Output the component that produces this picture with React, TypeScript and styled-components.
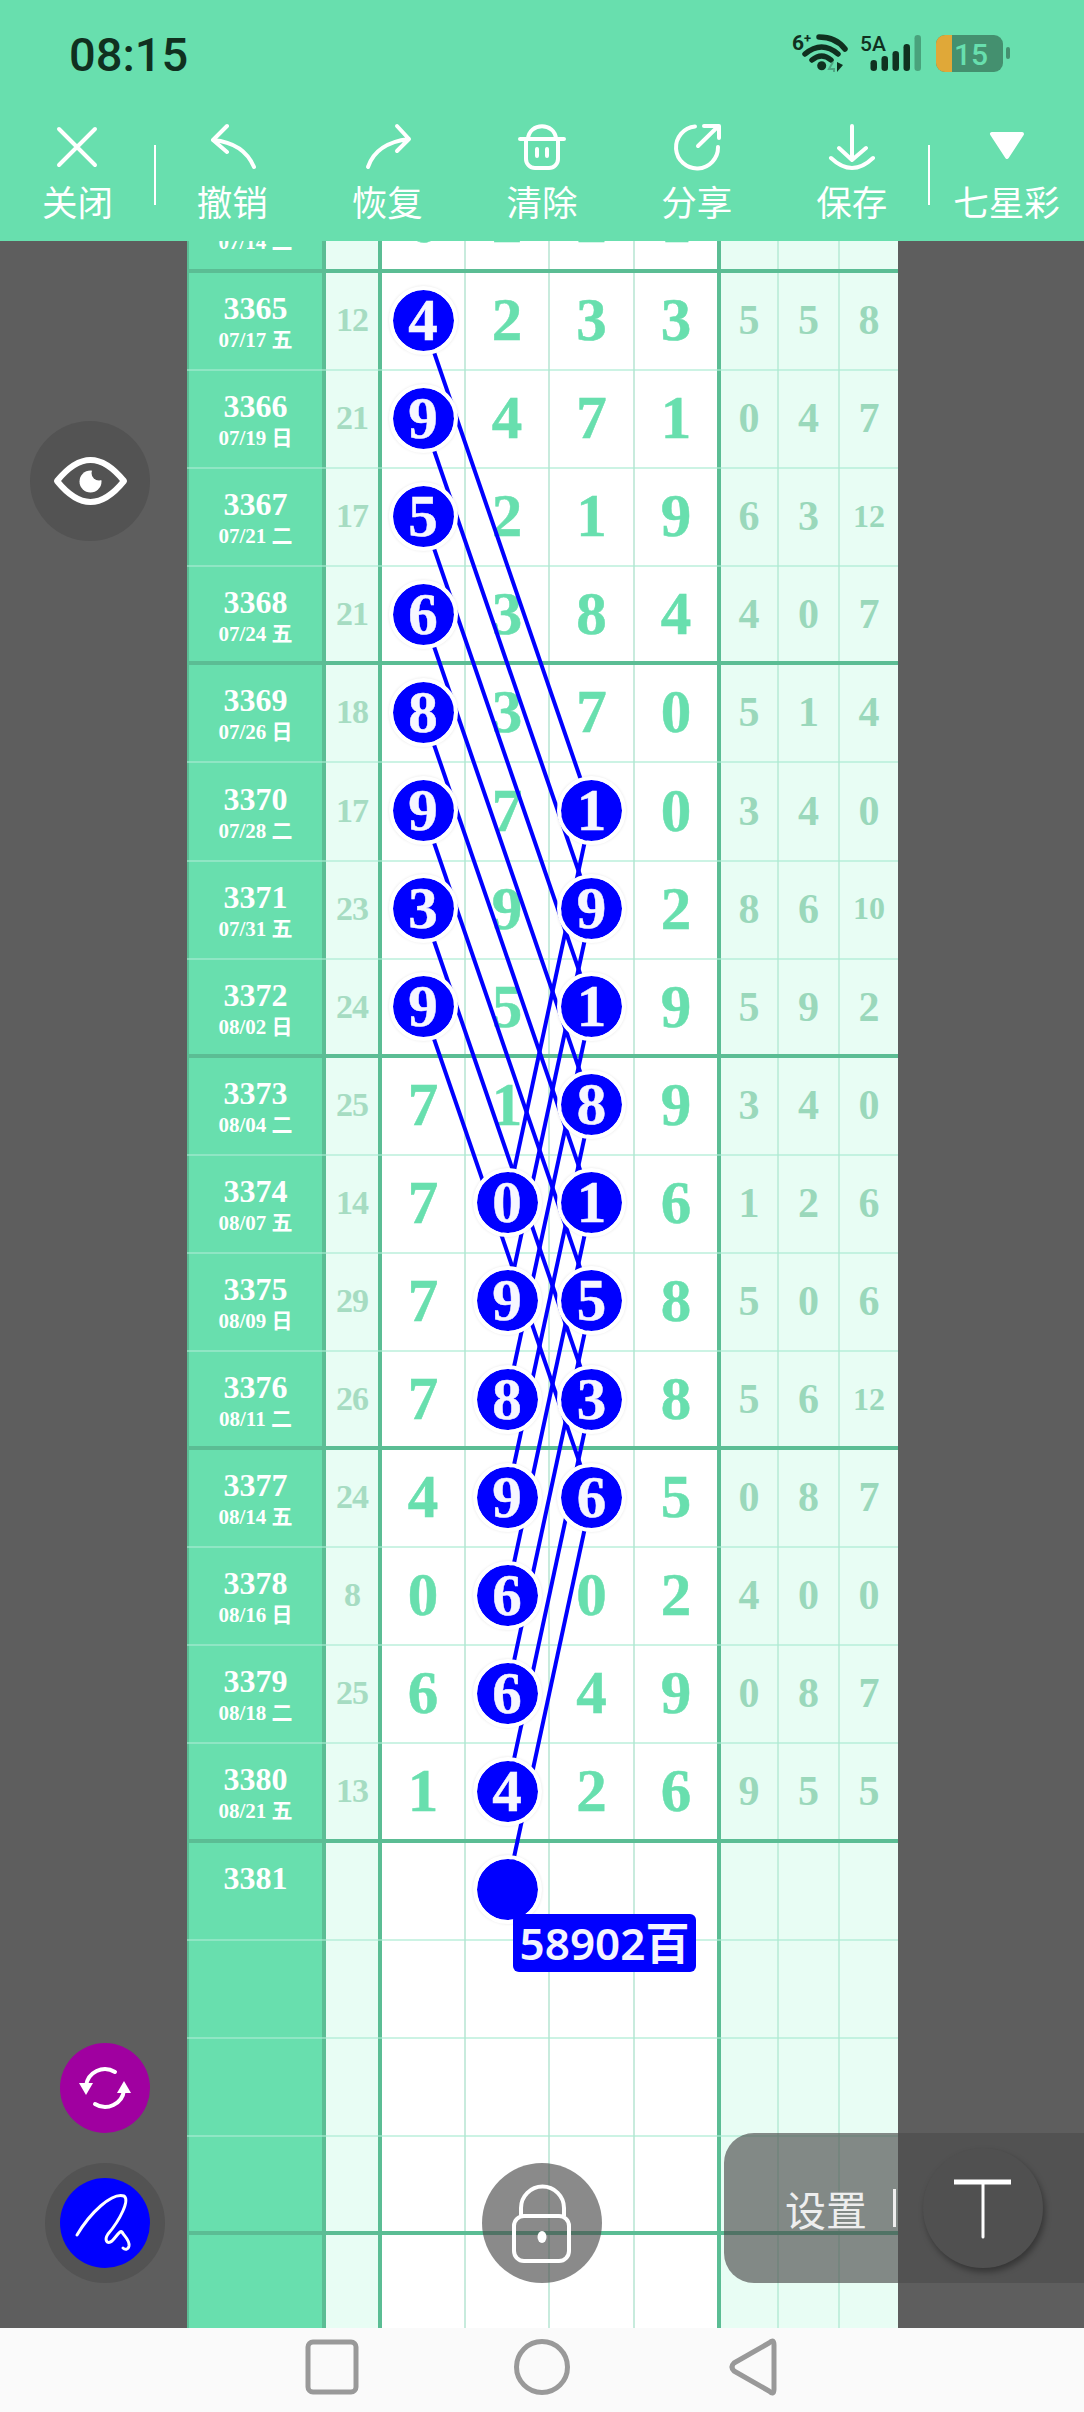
import React, { FC } from "react";
import styled, { createGlobalStyle } from "styled-components";

const GREEN = "#68dfae";
const LINE = "#5bbd94";
const BLUE = "#0000ff";
const PITCH = 98.1;
const COLS = [139, 56, 84, 84, 85, 86, 58, 61, 58];

interface RowData {
  no?: string;
  date?: string;
  sum?: number;
  digits?: number[];
  stats?: number[];
  marks?: number[];
}

const r = (no: string, date: string, sum: number, digits: number[], stats: number[], marks: number[] = []): RowData => ({
  no,
  date,
  sum,
  digits,
  stats,
  marks,
});

const rows: RowData[] = [
  // scrolled almost out of view, only the bottom of these shows under the header
  { date: "07/14 二", digits: [6, 2, 2, 1] },
  r("3365", "07/17 五", 12, [4, 2, 3, 3], [5, 5, 8], [0]),
  r("3366", "07/19 日", 21, [9, 4, 7, 1], [0, 4, 7], [0]),
  r("3367", "07/21 二", 17, [5, 2, 1, 9], [6, 3, 12], [0]),
  r("3368", "07/24 五", 21, [6, 3, 8, 4], [4, 0, 7], [0]),
  r("3369", "07/26 日", 18, [8, 3, 7, 0], [5, 1, 4], [0]),
  r("3370", "07/28 二", 17, [9, 7, 1, 0], [3, 4, 0], [0, 2]),
  r("3371", "07/31 五", 23, [3, 9, 9, 2], [8, 6, 10], [0, 2]),
  r("3372", "08/02 日", 24, [9, 5, 1, 9], [5, 9, 2], [0, 2]),
  r("3373", "08/04 二", 25, [7, 1, 8, 9], [3, 4, 0], [2]),
  r("3374", "08/07 五", 14, [7, 0, 1, 6], [1, 2, 6], [1, 2]),
  r("3375", "08/09 日", 29, [7, 9, 5, 8], [5, 0, 6], [1, 2]),
  r("3376", "08/11 二", 26, [7, 8, 3, 8], [5, 6, 12], [1, 2]),
  r("3377", "08/14 五", 24, [4, 9, 6, 5], [0, 8, 7], [1, 2]),
  r("3378", "08/16 日", 8, [0, 6, 0, 2], [4, 0, 0], [1]),
  r("3379", "08/18 二", 25, [6, 6, 4, 9], [0, 8, 7], [1]),
  r("3380", "08/21 五", 13, [1, 4, 2, 6], [9, 5, 5], [1]),
  { no: "3381", marks: [1] },
  {},
  {},
  {},
  {},
];

// main digit column centre inside the table, the 2 is the cell's right line
const colX = (c: number) => COLS.slice(0, c + 2).reduce((a, b) => a + b, 0) + (COLS[c + 2] - 2) / 2;
const rowY = (i: number) => i * PITCH + PITCH / 2 - 2;

const links = rows.flatMap((row, i) =>
  (row.marks ?? []).flatMap((c) => {
    if (c === 0) return [{ x1: colX(0), y1: rowY(i), x2: colX(2), y2: rowY(i + 5) }];
    if (c === 2) return [{ x1: colX(2), y1: rowY(i), x2: colX(1), y2: rowY(i + 4) }];
    return [];
  })
);

const tools = [
  { label: "关闭", icon: <path d="M12 6L48 42M48 6L12 42" /> },
  { label: "撤销", icon: <path d="M25 3L11 17L25 29M11 17Q42 20 52 44" /> },
  { label: "恢复", icon: <path d="M40 3L52 16L40 28M11 44Q19 20 52 16" /> },
  {
    label: "清除",
    icon: <path d="M8 16H52M14 16V36a9 9 0 0 0 9 9H37a9 9 0 0 0 9-9V16M16 16C17 -1 43 -1 44 16M25 26V33M35 26V33" />,
  },
  { label: "分享", icon: <path d="M28 3.5A21 21 0 1 0 51 24M31 23L51 3.5M37 3H52V15" /> },
  { label: "保存", icon: <path d="M30 3V37M17 25L30 37L44 25M9 35Q30 55 51 35" /> },
  { label: "七星彩", icon: <path d="M15 11H45L30 34Z" fill="#fff" /> },
];

const StatusIcons: FC = () => (
  <StatusSvg viewBox="0 0 250 70">
    <text x="12" y="31" fontSize="21" fontWeight="700" fill="#10301f" fontFamily="Roboto, sans-serif">
      6
    </text>
    <text x="24" y="24" fontSize="13" fontWeight="700" fill="#10301f" fontFamily="Roboto, sans-serif">
      +
    </text>
    <g fill="none" stroke="#10301f" strokeWidth="5.5" strokeLinecap="round">
      <path d="M32 41Q41.7 33 51 41" />
      <path d="M25 35Q41.7 21 58 35" />
      <path d="M39 18Q56 18 65 30" />
    </g>
    <circle cx="41.7" cy="46.7" r="4.5" fill="#10301f" />
    <path d="M57 43V53L63 46Z" fill="#10301f" />
    <path d="M53 43L49 50H54V53" fill="none" stroke="#4fa683" strokeWidth="2" />
    <text x="80" y="32" fontSize="21" fontWeight="500" fill="#10301f" fontFamily="Roboto, sans-serif">
      5A
    </text>
    <g fill="#10301f">
      <rect x="90.5" y="41" width="6.5" height="11" rx="3.2" />
      <rect x="101.5" y="37" width="6.5" height="15" rx="3.2" />
      <rect x="112.5" y="32" width="6.5" height="20" rx="3.2" />
      <rect x="123.5" y="25" width="6.5" height="27" rx="3.2" />
    </g>
    <rect x="134.5" y="16" width="6.5" height="36" rx="3.2" fill="#10301f" opacity="0.35" />
    <rect x="156" y="16" width="67" height="37" rx="9" fill="#44906f" />
    <path d="M172 16H165a9 9 0 0 0 -9 9V44a9 9 0 0 0 9 9H172Z" fill="#e0a838" />
    <rect x="226" y="28" width="4" height="12" rx="2" fill="#44906f" />
    <text x="174" y="46" fontSize="30" fontWeight="500" fill={GREEN} fontFamily="Roboto, sans-serif">
      15
    </text>
  </StatusSvg>
);

const App: FC = () => (
  <Page>
    <GlobalStyle />
    <Header>
      <StatusBar>
        <Time>08:15</Time>
        <StatusIcons />
      </StatusBar>
      <Toolbar>
        {tools.map((tool) => (
          <Tool key={tool.label} $divider={tool.label === "关闭"} $dividerLeft={tool.label === "七星彩"}>
            <ToolIcon viewBox="0 0 60 50">{tool.icon}</ToolIcon>
            <ToolLabel>{tool.label}</ToolLabel>
          </Tool>
        ))}
      </Toolbar>
    </Header>

    <Stage>
      <Table>
        {rows.map((row, i) => (
          <Row key={i} $thick={i % 4 === 0}>
            <DateCell>
              <RowNo>{row.no}</RowNo>
              <RowDate>{row.date ?? "\u00a0"}</RowDate>
            </DateCell>
            <SumCell>{row.sum}</SumCell>
            {[0, 1, 2, 3].map((c) => (
              <MainCell key={c}>
                {row.marks?.includes(c) ? <Ball>{row.digits?.[c]}</Ball> : row.digits?.[c]}
              </MainCell>
            ))}
            {[0, 1, 2].map((c) => (
              <StatCell key={c} $small={(row.stats?.[c] ?? 0) > 9}>
                {row.stats?.[c]}
              </StatCell>
            ))}
          </Row>
        ))}
        <Lines>
          {links.map((l, i) => (
            <line key={i} {...l} stroke={BLUE} strokeWidth="4" />
          ))}
        </Lines>
      </Table>

      <Chip>58902百</Chip>

      <EyeButton>
        <svg width="120" height="120" viewBox="0 0 120 120">
          <path
            d="M27 60C40 44 50 39 60.5 39C71 39 81 44 94 60C81 76 71 81 60.5 81C50 81 40 76 27 60Z"
            fill="none"
            stroke="#fff"
            strokeWidth="6"
            strokeLinejoin="round"
          />
          <circle cx="60.5" cy="60.5" r="11" fill="#fff" />
          <circle cx="69" cy="52" r="7.5" fill="#535353" />
        </svg>
      </EyeButton>

      <SyncButton>
        <svg width="90" height="90" viewBox="0 0 90 90" fill="none" stroke="#fff" strokeWidth="4" strokeLinecap="round">
          <path d="M55 29A19 19 0 0 0 26 43" />
          <path d="M35 61A19 19 0 0 0 64 47" />
          <path d="M19 40H33L26 52Z" fill="#fff" stroke="none" />
          <path d="M57 50H71L64 38Z" fill="#fff" stroke="none" />
        </svg>
      </SyncButton>

      <PenButton>
        <PenInner>
          <svg width="90" height="90" viewBox="0 0 90 90" fill="none" stroke="#fff" strokeWidth="3" strokeLinecap="round">
            <path d="M17 57C30 35 52 14 64 18C70 22 60 42 48 56C44 62 47 67 52 63C56 59 60 52 62 54C64 58 70 62 69 68C68 72 65 72 63 70" />
          </svg>
        </PenInner>
      </PenButton>

      <LockButton>
        <svg width="120" height="120" viewBox="0 0 120 120" fill="none" stroke="#fff" strokeWidth="4">
          <path d="M39 53V45a21 21 0 0 1 43 0V53" />
          <rect x="32" y="53" width="55" height="45" rx="10" />
          <ellipse cx="60" cy="74" rx="4.5" ry="6" fill="#fff" stroke="none" />
        </svg>
      </LockButton>

      <SettingsPill>
        设置
        <PillBar />
      </SettingsPill>

      <TextButton>
        <svg width="120" height="120" viewBox="0 0 120 120" fill="none" stroke="#fff">
          <path d="M31 34H88" strokeWidth="5" />
          <path d="M60 34V89" strokeWidth="3" strokeLinecap="round" />
        </svg>
      </TextButton>
    </Stage>

    <NavBar>
      <NavSlot>
        <svg width="60" height="60" viewBox="0 0 60 60" fill="none" stroke="#999" strokeWidth="5">
          <rect x="6" y="5" width="48" height="50" rx="5" />
        </svg>
      </NavSlot>
      <NavSlot>
        <svg width="60" height="60" viewBox="0 0 60 60" fill="none" stroke="#999" strokeWidth="5">
          <circle cx="30" cy="30" r="25.5" />
        </svg>
      </NavSlot>
      <NavSlot>
        <svg width="60" height="60" viewBox="0 0 60 60" fill="none" stroke="#999" strokeWidth="5" strokeLinejoin="round">
          <path d="M47 6Q52 1 52 8V52Q52 59 47 54L12 34Q8 30 12 26Z" />
        </svg>
      </NavSlot>
    </NavBar>
  </Page>
);

export default App;

const GlobalStyle = createGlobalStyle`
  html, body {
    margin: 0;
    padding: 0;
    background: #5e5e5e;
  }
`;

const Page = styled.div`
  width: 1084px;
  height: 2412px;
  display: flex;
  flex-direction: column;
  overflow: hidden;
`;

const Header = styled.header`
  height: 241px;
  flex: none;
  background: ${GREEN};
  position: relative;
  z-index: 5;
`;

const StatusBar = styled.div`
  height: 108px;
  padding: 0 54px 0 69px;
  display: flex;
  align-items: center;
  justify-content: space-between;
`;

const Time = styled.div`
  font: 500 47px/1 Roboto, sans-serif;
  color: #10301f;
`;

const StatusSvg = styled.svg`
  width: 250px;
  height: 70px;
`;

const Toolbar = styled.div`
  display: grid;
  grid-template-columns: repeat(7, 1fr);
  padding-top: 15px;
`;

const Tool = styled.div<{ $divider?: boolean; $dividerLeft?: boolean }>`
  position: relative;
  display: flex;
  flex-direction: column;
  align-items: center;
  gap: 8px;

  &::after {
    content: "";
    display: ${(p) => (p.$divider || p.$dividerLeft ? "block" : "none")};
    position: absolute;
    top: 22px;
    height: 60px;
    width: 2px;
    background: #fff;
    ${(p) => (p.$divider ? "right: -1px;" : "left: -1px;")}
  }
`;

const ToolIcon = styled.svg`
  width: 60px;
  height: 50px;
  fill: none;
  stroke: #fff;
  stroke-width: 4;
  stroke-linecap: round;
  stroke-linejoin: round;
`;

const ToolLabel = styled.div`
  font: 400 35.5px/40px "Noto Sans CJK SC", sans-serif;
  color: #fff;
  white-space: nowrap;
`;

const Stage = styled.main`
  flex: 1;
  min-height: 0;
  position: relative;
  overflow: hidden;
  background: #5e5e5e;
`;

const Table = styled.div`
  position: relative;
  width: ${COLS.reduce((a, b) => a + b, 0)}px;
  margin: -66.1px 0 0 187px;
  font-family: "Liberation Serif", "Noto Sans CJK SC", serif;
  font-weight: 700;
`;

const Row = styled.div<{ $thick: boolean }>`
  position: relative;
  height: ${PITCH}px;
  display: grid;
  grid-template-columns: ${COLS.map((w) => `${w}px`).join(" ")};

  &::after {
    content: "";
    position: absolute;
    left: 0;
    right: 0;
    bottom: 0;
    height: ${(p) => (p.$thick ? 4 : 2)}px;
    background: ${(p) => (p.$thick ? LINE : "rgba(170, 235, 210, 0.6)")};
  }
`;

const Cell = styled.div`
  box-sizing: border-box;
  display: flex;
  align-items: center;
  justify-content: center;
  padding-bottom: 4px;
  min-width: 0;
`;

const DateCell = styled(Cell)`
  flex-direction: column;
  padding-bottom: 0;
  background: ${GREEN};
  border-left: 2px solid ${LINE};
  border-right: 4px solid ${LINE};
  color: #fff;
`;

const RowNo = styled.div`
  font-size: 32px;
  line-height: 36px;
  min-height: 36px;
`;

const RowDate = styled.div`
  font-size: 21px;
  line-height: 28px;
  white-space: nowrap;
`;

const SumCell = styled(Cell)`
  background: #e8fdf4;
  border-right: 4px solid ${LINE};
  color: #a6dcc2;
  font-size: 34px;
  letter-spacing: -1px;
`;

const MainCell = styled(Cell)`
  background: #fff;
  border-right: 2px solid #c8ebdd;
  color: ${GREEN};
  font-size: 61px;
  -webkit-text-stroke: 0.5px ${GREEN};

  &:nth-child(6) {
    border-right: 4px solid ${LINE};
  }
`;

const StatCell = styled(Cell)<{ $small: boolean }>`
  background: #e8fdf4;
  border-right: 2px solid #c3efdd;
  color: #9ad8bb;
  font-size: ${(p) => (p.$small ? 32 : 42)}px;

  &:last-child {
    border-right: none;
  }
`;

const Ball = styled.div`
  position: relative;
  z-index: 2;
  flex: none;
  box-sizing: border-box;
  width: 69px;
  height: 69px;
  border-radius: 50%;
  border: 4px solid #fff;
  box-shadow: 0 0 3px rgba(0, 0, 0, 0.1);
  background-color: ${BLUE};
  background-clip: padding-box;
  display: flex;
  align-items: center;
  justify-content: center;
  color: #f6f6ff;
  font-size: 59px;
  line-height: 1;
  -webkit-text-stroke: 0.5px #f6f6ff;
`;

const Lines = styled.svg`
  position: absolute;
  z-index: 1;
  left: 0;
  top: 0;
  width: 100%;
  height: 100%;
  pointer-events: none;
`;

// label next to the empty ball of the coming draw
const Chip = styled.div`
  position: absolute;
  z-index: 3;
  left: 513px;
  top: 1673px;
  width: 183px;
  height: 58px;
  border-radius: 6px;
  background: ${BLUE};
  color: #f4f4ff;
  display: flex;
  align-items: center;
  justify-content: center;
  font: 600 44px/1 "Noto Sans", "Noto Sans CJK SC", sans-serif;
`;

const RoundButton = styled.div`
  position: absolute;
  z-index: 4;
  border-radius: 50%;
  display: flex;
  align-items: center;
  justify-content: center;
`;

const EyeButton = styled(RoundButton)`
  left: 30px;
  top: 180px;
  width: 120px;
  height: 120px;
  background: #535353;
`;

const SyncButton = styled(RoundButton)`
  left: 60px;
  top: 1802px;
  width: 90px;
  height: 90px;
  background: #a000a0;
`;

const PenButton = styled(RoundButton)`
  left: 45px;
  top: 1922px;
  width: 120px;
  height: 120px;
  background: #535353;
`;

const PenInner = styled(RoundButton)`
  position: static;
  width: 90px;
  height: 90px;
  background: ${BLUE};
`;

const LockButton = styled(RoundButton)`
  left: 482px;
  top: 1922px;
  width: 120px;
  height: 120px;
  background: rgba(75, 75, 75, 0.65);
`;

const SettingsPill = styled.div`
  position: absolute;
  z-index: 3;
  left: 724px;
  right: 0;
  top: 1892px;
  height: 150px;
  box-sizing: border-box;
  padding-left: 61px;
  border-radius: 30px 0 0 30px;
  background: rgba(75, 75, 75, 0.65);
  color: #eee;
  display: flex;
  align-items: center;
  font: 400 41px/1 "Noto Sans CJK SC", sans-serif;
`;

const PillBar = styled.span`
  width: 3px;
  height: 38px;
  margin-left: 26px;
  background: #eee;
`;

const TextButton = styled(RoundButton)`
  left: 923px;
  top: 1907px;
  width: 120px;
  height: 120px;
  background: #505050;
  box-shadow: 2px 4px 6px rgba(0, 0, 0, 0.35);
`;

const NavBar = styled.nav`
  height: 84px;
  flex: none;
  background: #fafafa;
  display: flex;
  justify-content: center;
  align-items: center;
  position: relative;
  z-index: 5;
`;

const NavSlot = styled.div`
  width: 210px;
  display: flex;
  justify-content: center;
  padding-bottom: 6px;
`;
